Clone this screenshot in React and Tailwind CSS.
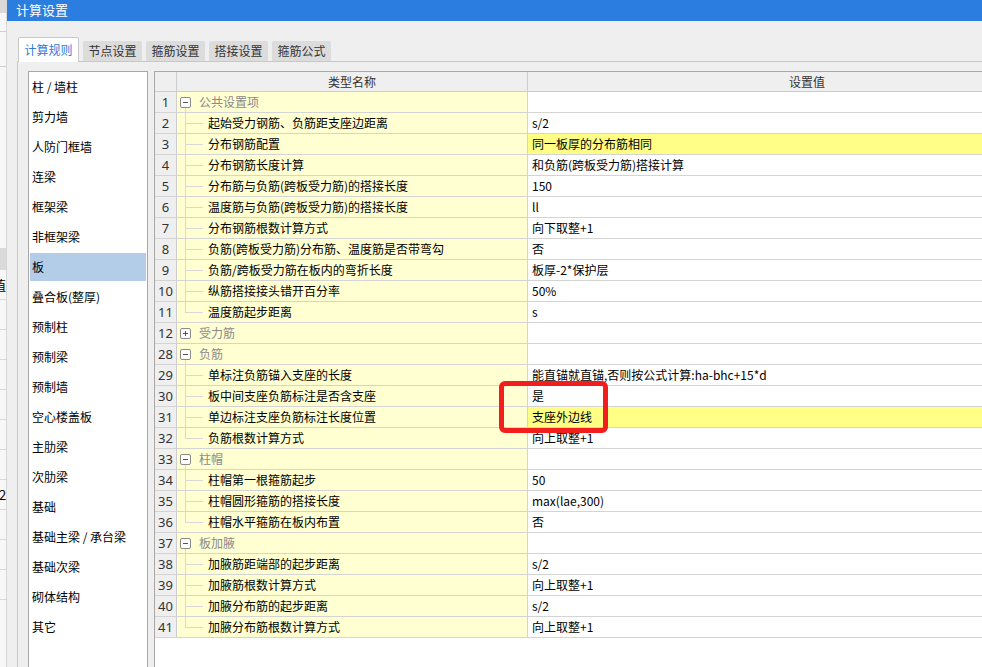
const rows = [
  { n: 1, group: true, open: true, label: '公共设置项' },
  { n: 2, label: '起始受力钢筋、负筋距支座边距离', value: 's/2' },
  { n: 3, label: '分布钢筋配置', value: '同一板厚的分布筋相同', hl: true },
  { n: 4, label: '分布钢筋长度计算', value: '和负筋(跨板受力筋)搭接计算' },
  { n: 5, label: '分布筋与负筋(跨板受力筋)的搭接长度', value: '150' },
  { n: 6, label: '温度筋与负筋(跨板受力筋)的搭接长度', value: 'll' },
  { n: 7, label: '分布钢筋根数计算方式', value: '向下取整+1' },
  { n: 8, label: '负筋(跨板受力筋)分布筋、温度筋是否带弯勾', value: '否' },
  { n: 9, label: '负筋/跨板受力筋在板内的弯折长度', value: '板厚-2*保护层' },
  { n: 10, label: '纵筋搭接接头错开百分率', value: '50%' },
  { n: 11, label: '温度筋起步距离', value: 's' },
  { n: 12, group: true, open: false, label: '受力筋' },
  { n: 28, group: true, open: true, label: '负筋' },
  { n: 29, label: '单标注负筋锚入支座的长度', value: '能直锚就直锚,否则按公式计算:ha-bhc+15*d' },
  { n: 30, label: '板中间支座负筋标注是否含支座', value: '是' },
  { n: 31, label: '单边标注支座负筋标注长度位置', value: '支座外边线', hl: true },
  { n: 32, label: '负筋根数计算方式', value: '向上取整+1' },
  { n: 33, group: true, open: true, label: '柱帽' },
  { n: 34, label: '柱帽第一根箍筋起步', value: '50' },
  { n: 35, label: '柱帽圆形箍筋的搭接长度', value: 'max(lae,300)' },
  { n: 36, label: '柱帽水平箍筋在板内布置', value: '否' },
  { n: 37, group: true, open: true, label: '板加腋' },
  { n: 38, label: '加腋筋距端部的起步距离', value: 's/2' },
  { n: 39, label: '加腋筋根数计算方式', value: '向上取整+1' },
  { n: 40, label: '加腋分布筋的起步距离', value: 's/2' },
  { n: 41, label: '加腋分布筋根数计算方式', value: '向上取整+1' },
];

const sideItems = [
  '柱 / 墙柱', '剪力墙', '人防门框墙', '连梁', '框架梁', '非框架梁', '板', '叠合板(整厚)',
  '预制柱', '预制梁', '预制墙', '空心楼盖板', '主肋梁', '次肋梁', '基础', '基础主梁 / 承台梁',
  '基础次梁', '砌体结构', '其它',
];

const tabs = ['计算规则', '节点设置', '箍筋设置', '搭接设置', '箍筋公式'];

const cjk = { fontFamily: '"Microsoft YaHei", "Noto Sans CJK SC", "Noto Sans", sans-serif' };

function NameCell({ row, last }) {
  if (row.group) {
    return (
      <div className="relative h-full">
        <div className="absolute left-[3px] top-[5px] w-[11px] h-[11px] border border-[#8a8a8a] rounded-[2px] bg-white flex items-center justify-center">
          <div className="w-[5px] h-px bg-[#555]" />
          {!row.open && <div className="absolute w-px h-[5px] bg-[#555]" />}
        </div>
        {row.open && <div className="absolute left-[8px] top-[16px] bottom-[-1px] w-px bg-[#d8d8d8]" />}
        <div className="pl-[22px] leading-[20px] text-[#8a8a8a]">{row.label}</div>
      </div>
    );
  }
  return (
    <div className="relative h-full">
      <div className={`absolute left-[8px] top-0 w-px bg-[#d8d8d8] ${last ? 'h-[10px]' : 'bottom-[-1px]'}`} />
      <div className="absolute left-[8px] top-[10px] w-[18px] h-px bg-[#d8d8d8]" />
      <div className="pl-[31px] leading-[20px] text-black">{row.label}</div>
    </div>
  );
}

export default function App() {
  return (
    <div className="relative w-[982px] h-[667px] overflow-hidden flex bg-[#efefef] text-[12px]" style={cjk}>
      {/* window behind */}
      <div className="w-[6px] shrink-0 flex flex-col bg-[#f7f7f7] overflow-hidden">
        <div className="h-[13px] bg-[#d8d8d8]" />
        <div className="h-[19px] border-b border-[#d0d0d0]" />
        <div className="h-[35px] border-b border-[#d0d0d0]" />
        <div className="h-[181px]" />
        <div className="h-[22px] bg-[#dadada]" />
        <div className="h-[30px] border-b border-[#d8d8d8] overflow-hidden whitespace-nowrap leading-[30px] -ml-[7px] text-[13px]">值</div>
        <div className="h-[30px] border-b border-[#d8d8d8]" />
        <div className="h-[30px] border-b border-[#d8d8d8]" />
        <div className="h-[30px] border-b border-[#d8d8d8]" />
        <div className="h-[30px] border-b border-[#d8d8d8]" />
        <div className="h-[30px] border-b border-[#d8d8d8]" />
        <div className="h-[30px] border-b border-[#d8d8d8]" />
        <div className="h-[30px] border-b border-[#d8d8d8] overflow-hidden whitespace-nowrap leading-[30px] -ml-[1px] text-[13px]">20</div>
        <div className="h-[30px] border-b border-[#d8d8d8]" />
        <div className="h-[30px] border-b border-[#d8d8d8]" />
        <div className="h-[30px] border-b border-[#d8d8d8]" />
      </div>

      {/* dialog */}
      <div className="flex-1 flex flex-col border-l border-[#d6d6d6] min-w-0">
        <div className="h-[21px] shrink-0 bg-[#2b7de0] text-white text-[13px] leading-[20px] pl-[9px]">计算设置</div>

        <div className="flex-1 flex flex-col pl-[10px] pt-[15px] min-h-0">
          {/* tabs */}
          <div className="flex items-end h-[25px] shrink-0 pl-px">
            {tabs.map((t, i) =>
              i === 0 ? (
                <div key={t} className="relative z-10 w-[61px] h-[25px] -mb-px bg-white border border-b-0 border-[#c8c8c8] rounded-t-[2px] text-[#2f7bd8] flex items-center justify-center">
                  {t}
                </div>
              ) : (
                <div key={t} className="ml-[4px] w-[59px] h-[20px] bg-[#dcdcdc] rounded-t-[2px] text-[#333] flex items-center justify-center">
                  {t}
                </div>
              )
            )}
          </div>

          {/* panel */}
          <div className="flex-1 flex border-t border-l border-[#c8c8c8] pl-[10px] pt-[9px] gap-[6px] min-h-0">
            <div className="w-[120px] shrink-0 bg-white border border-b-0 border-[#a8a8a8] p-px flex flex-col gap-[2px]">
              {sideItems.map((s) => (
                <div key={s} className={`h-[28px] shrink-0 pl-[2px] leading-[28px] text-black whitespace-nowrap ${s === '板' ? 'bg-[#b3cde9]' : ''}`}>
                  {s}
                </div>
              ))}
            </div>

            <div className="flex-1 bg-white border-l border-t border-[#a8a8a8] overflow-hidden">
              <div className="w-[932px]">
                <div className="flex h-[20px] bg-[#efefef] border-b border-[#cdcdcd] text-[#333]">
                  <div className="w-[22px] border-r border-[#cdcdcd]" />
                  <div className="w-[351px] border-r border-[#cdcdcd] text-center leading-[19px]">类型名称</div>
                  <div className="w-[558px] text-center leading-[19px]">设置值</div>
                </div>
                {rows.map((r, i) => {
                  const next = rows[i + 1];
                  const last = !next || next.group;
                  return (
                    <div key={r.n} className="flex h-[21px] border-b border-[#d4d4d4]">
                      <div className="w-[22px] shrink-0 bg-[#efefef] border-r border-[#cdcdcd] text-center leading-[20px] text-[13px] text-[#333]" style={{ fontFamily: '"Noto Sans", "DejaVu Sans", sans-serif' }}>
                        {r.n}
                      </div>
                      <div className="w-[351px] shrink-0 bg-[#ffffd2] border-r border-[#d4d4d4] whitespace-nowrap">
                        <NameCell row={r} last={last} />
                      </div>
                      <div className={`w-[558px] shrink-0 pl-[4px] leading-[20px] whitespace-nowrap text-black ${r.hl ? 'bg-[#ffff85]' : ''}`}>
                        {r.value || ''}
                      </div>
                    </div>
                  );
                })}
              </div>
            </div>
          </div>
        </div>
      </div>

      {/* red annotation */}
      <div className="absolute left-[499px] top-[381px] w-[109px] h-[52px] border-[5px] border-[#f21d1d] rounded-[6px]" />
    </div>
  );
}
